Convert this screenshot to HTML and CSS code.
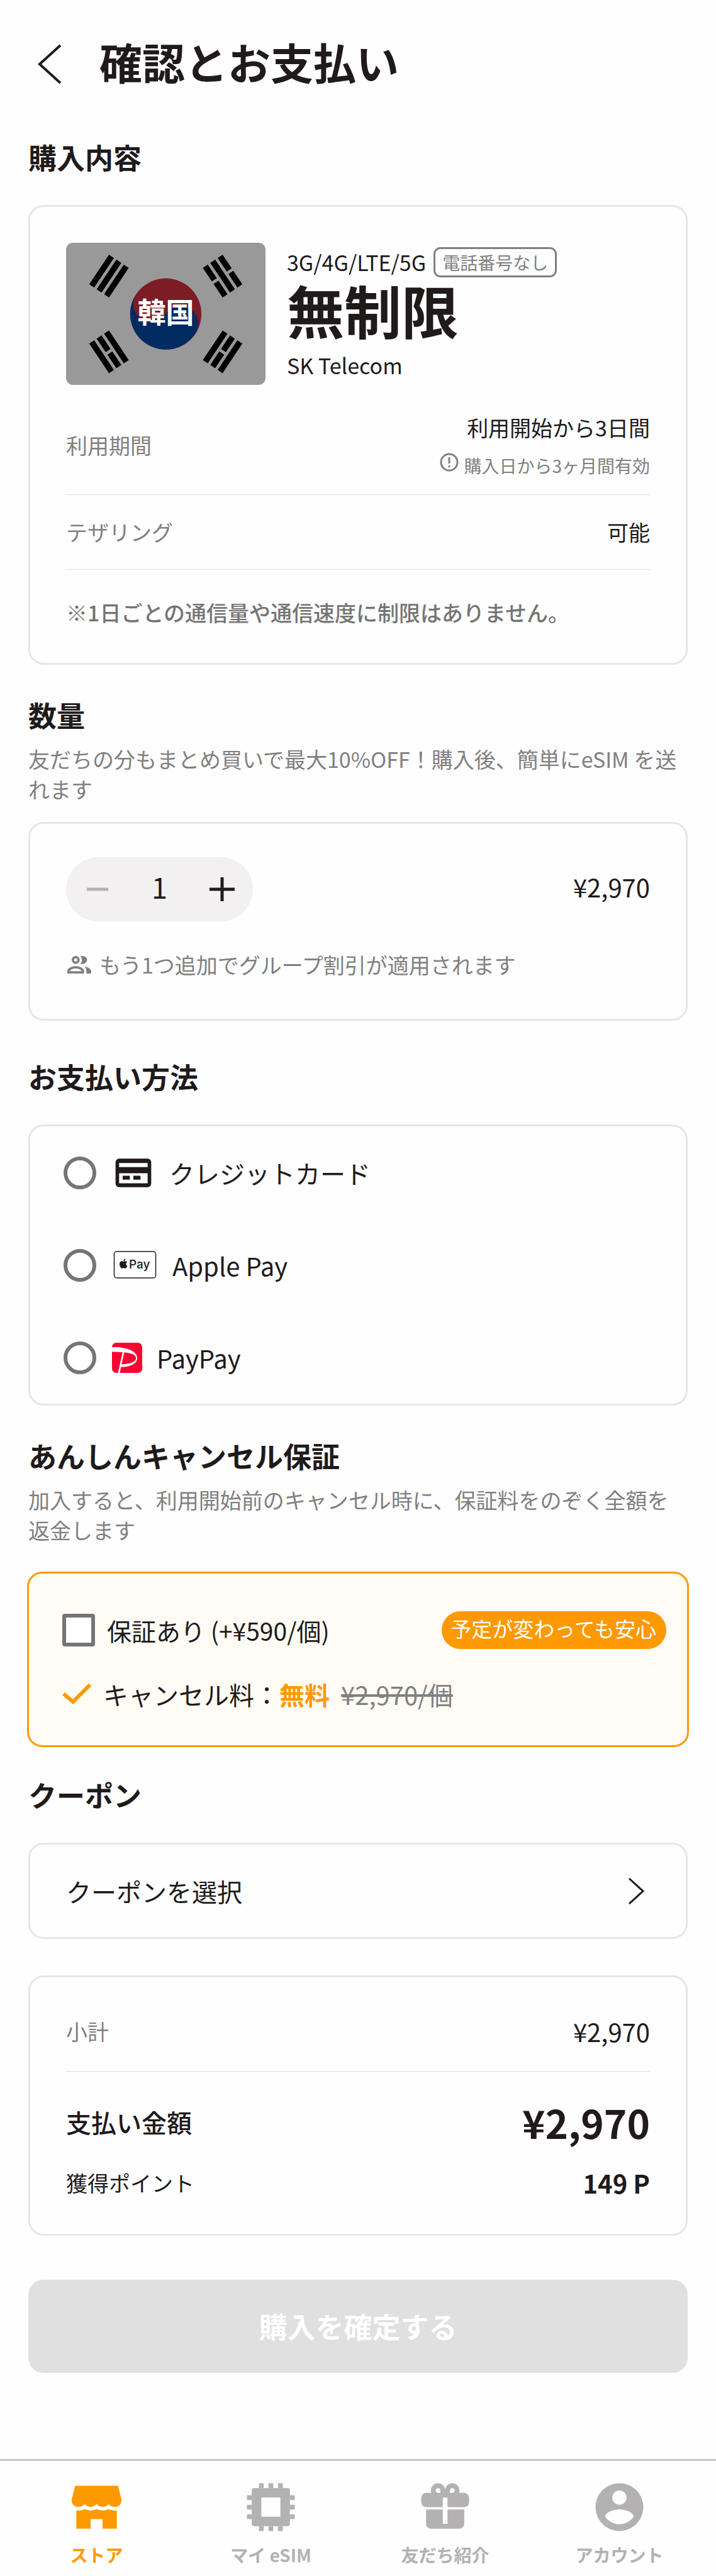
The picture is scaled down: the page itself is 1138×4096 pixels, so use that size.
FILE: index.html
```html
<!DOCTYPE html>
<html lang="ja">

<head>
    <meta charset="UTF-8">
    <meta name="viewport" content="width=device-width, initial-scale=1.0">
    <title>確認とお支払い</title>
    <link rel="stylesheet" href="styles.css">
</head>

<body>
    <header class="header">
        <button type="button" class="back-btn" aria-label="戻る">
            <svg width="38" height="64" viewBox="0 0 38 64" fill="none" stroke="currentColor" stroke-width="4">
                <path d="M36 2L3 32l33 30" />
            </svg>
        </button>
        <h1>確認とお支払い</h1>
    </header>

    <main class="container">
        <section class="section">
            <h2>購入内容</h2>
            <div class="card">
                <div class="plan">
                    <div class="plan-flag">
                        <svg class="flag" viewBox="-33.6 -24 67.2 48" aria-hidden="true">
                            <rect x="-34" y="-24" width="68" height="48" fill="#999" />
                            <g transform="rotate(-56.31)">
                                <g id="bars" stroke="#000" stroke-width="2">
                                    <path d="M-6-26H6M-6-23H6M-6-20H6" />
                                    <path d="M-6 20H6M-6 23H6M-6 26H6" />
                                </g>
                                <path stroke="#999" d="M0 21.5v3" />
                                <circle r="12" fill="#7c1c24" />
                                <path fill="#002b60" d="M0-12A6 6 0 0 0 0 0A6 6 0 0 1 0 12A12 12 0 0 1 0-12Z" />
                            </g>
                            <g transform="rotate(-123.69)">
                                <use href="#bars" />
                                <path stroke="#999" d="M0-24.5v3M0 18.5v3.5M0 24.5v3" />
                            </g>
                        </svg>
                        <span class="flag-name">韓国</span>
                    </div>
                    <div class="plan-info">
                        <div class="plan-network">3G/4G/LTE/5G <span class="tag">電話番号なし</span></div>
                        <p class="plan-data">無制限</p>
                        <p class="plan-carrier">SK Telecom</p>
                    </div>
                </div>

                <dl class="details">
                    <div class="detail-row period">
                        <dt>利用期間</dt>
                        <dd>
                            <p>利用開始から3日間</p>
                            <p class="validity">
                                <svg width="30" height="30" viewBox="0 0 30 30" fill="none" stroke="currentColor" stroke-width="3">
                                    <circle cx="15" cy="15" r="13" />
                                    <path d="M15 7v10M15 20v3" />
                                </svg>
                                購入日から3ヶ月間有効
                            </p>
                        </dd>
                    </div>
                    <div class="detail-row">
                        <dt>テザリング</dt>
                        <dd>可能</dd>
                    </div>
                </dl>
                <p class="note">※1日ごとの通信量や通信速度に制限はありません。</p>
            </div>
        </section>

        <section class="section">
            <h2>数量</h2>
            <p class="description">友だちの分もまとめ買いで最大10%OFF！購入後、簡単にeSIM を送れます</p>
            <div class="card quantity-card">
                <div class="quantity-row">
                    <div class="stepper">
                        <button type="button" aria-label="減らす" disabled>
                            <svg width="40" height="40" viewBox="0 0 40 40" stroke="currentColor" stroke-width="5">
                                <path d="M3 20h34" />
                            </svg>
                        </button>
                        <output>1</output>
                        <button type="button" aria-label="増やす">
                            <svg width="40" height="40" viewBox="0 0 40 40" stroke="currentColor" stroke-width="5">
                                <path d="M0 20h40M20 1v38" />
                            </svg>
                        </button>
                    </div>
                    <span class="price">¥2,970</span>
                </div>
                <p class="group-hint">
                    <svg width="38" height="28" viewBox="0 0 114 84" fill="currentColor">
                        <circle cx="40" cy="19" r="13.5" fill="none" stroke="currentColor" stroke-width="11" />
                        <path d="M62 1c16-4 32 4 32 18S78 42 62 38c10-10 10-27 0-37z" />
                        <path fill-rule="evenodd" d="M0 84V72c0-15 25-23 40-23s40 8 40 23v12zM12 73h56c0-7-16-13-28-13s-28 6-28 13z" />
                        <path d="M82 50c18 4 32 11 32 24v10H91V72c0-9-3-16-9-22z" />
                    </svg>
                    もう1つ追加でグループ割引が適用されます
                </p>
            </div>
        </section>

        <section class="section payment">
            <h2>お支払い方法</h2>
            <div class="card payment-card">
                <label class="payment-option">
                    <input type="radio" name="payment" value="card">
                    <svg width="68" height="68" viewBox="0 0 24 24" fill="currentColor">
                        <path fill-rule="evenodd" d="M4 4h16a2 2 0 0 1 2 2v12a2 2 0 0 1-2 2H4a2 2 0 0 1-2-2V6a2 2 0 0 1 2-2zm0 2.4v2.3h16V6.4zm0 5.8v5.6h16v-5.6z" />
                        <path d="M6 13.6h4v2.2H6zM12 13.6h4v2.2h-4z" />
                    </svg>
                    <span>クレジットカード</span>
                </label>
                <label class="payment-option">
                    <input type="radio" name="payment" value="apple">
                    <svg width="73" height="46" viewBox="0 0 73 46">
                        <rect x="3.5" y="1" width="66" height="42" rx="4" fill="#fff" stroke="#201a1b" stroke-width="1.5" />
                        <path fill="#201a1b" transform="translate(10.5 12.5) scale(.64)" d="M12.152 6.896c-.948 0-2.415-1.078-3.96-1.04-2.04.027-3.91 1.183-4.961 3.014-2.117 3.675-.546 9.103 1.519 12.09 1.013 1.454 2.208 3.09 3.792 3.039 1.52-.065 2.09-.987 3.935-.987 1.831 0 2.35.987 3.96.948 1.637-.026 2.676-1.48 3.676-2.948 1.156-1.688 1.636-3.325 1.662-3.415-.039-.013-3.182-1.221-3.22-4.857-.026-3.04 2.48-4.494 2.597-4.559-1.429-2.09-3.623-2.324-4.39-2.376-2-.156-3.675 1.09-4.61 1.09zM15.53 3.83c.843-1.012 1.4-2.427 1.245-3.83-1.207.052-2.662.805-3.532 1.818-.78.896-1.454 2.338-1.273 3.714 1.338.104 2.715-.688 3.559-1.701" />
                        <text class="apple-text" x="27" y="28">Pay</text>
                    </svg>
                    <span>Apple Pay</span>
                </label>
                <label class="payment-option">
                    <input type="radio" name="payment" value="paypay">
                    <svg width="48" height="48" viewBox="0 0 152 152">
                        <rect width="152" height="152" rx="22" fill="#ff0033" />
                        <path fill="#fff" d="M0 22C74 20 127 42 127 77C127 106 90 123 46 123L49 109C88 107 121 99 121 77C121 58 88 46 0 46ZM54 46h8L39 152h-9z" />
                    </svg>
                    <span>PayPay</span>
                </label>
            </div>
        </section>

        <section class="section">
            <h2>あんしんキャンセル保証</h2>
            <p class="description">加入すると、利用開始前のキャンセル時に、保証料をのぞく全額を返金します</p>
            <div class="card guarantee-card">
                <div class="guarantee-row">
                    <label class="guarantee-label">
                        <input type="checkbox" name="guarantee">
                        <span>保証あり (+¥590/個)</span>
                    </label>
                    <span class="badge">予定が変わっても安心</span>
                </div>
                <p class="cancel-fee">
                    <svg width="47" height="34" viewBox="0 0 47 34" fill="none" stroke="currentColor" stroke-width="6">
                        <path d="M2 16l15 13L44 2" />
                    </svg>
                    <span>キャンセル料：<strong>無料</strong></span>
                    <s>¥2,970/個</s>
                </p>
            </div>
        </section>

        <section class="section coupon">
            <h2>クーポン</h2>
            <button type="button" class="card coupon-btn">
                <span>クーポンを選択</span>
                <svg width="34" height="42" viewBox="0 0 34 42" fill="none" stroke="currentColor" stroke-width="3">
                    <path d="M1 1l22 20L1 41" />
                </svg>
            </button>
        </section>

        <dl class="card summary">
            <div class="summary-row subtotal">
                <dt>小計</dt>
                <dd>¥2,970</dd>
            </div>
            <div class="summary-row total">
                <dt>支払い金額</dt>
                <dd>¥2,970</dd>
            </div>
            <div class="summary-row points">
                <dt>獲得ポイント</dt>
                <dd>149 P</dd>
            </div>
        </dl>

        <button type="submit" class="submit-btn" disabled>購入を確定する</button>
    </main>

    <nav class="tab-bar">
        <a href="#" class="tab active">
            <svg viewBox="0 0 24 24" fill="currentColor">
                <path d="M3 3h18l1.5 6c0 1.7-1.3 2.9-2.8 2.9-1.2 0-2.2-.5-2.7-1.2-.5.7-1.5 1.2-2.5 1.2s-2-.5-2.5-1.2c-.5.7-1.5 1.2-2.5 1.2s-2-.5-2.5-1.2c-.5.7-1.5 1.2-2.7 1.2-1.5 0-2.8-1.2-2.8-2.9z" />
                <path d="M3.5 13.4c1.2.1 2.5 0 3.5-.6 1.5.8 3.5.8 5 0 1.5.8 3.5.8 5 0 1 .6 2.3.7 3.5.6V21h-6v-4h-5v4h-6z" />
            </svg>
            ストア
        </a>
        <a href="#" class="tab">
            <svg viewBox="0 0 24 24" fill="currentColor">
                <path fill-rule="evenodd" d="M5 4h14a1 1 0 0 1 1 1v14a1 1 0 0 1-1 1H5a1 1 0 0 1-1-1V5a1 1 0 0 1 1-1zm3 4v8h8V8z" />
                <path d="M7 2h2v2H7zM11 2h2v2h-2zM15 2h2v2h-2zM7 20h2v2H7zM11 20h2v2h-2zM15 20h2v2h-2zM2 7h2v2H2zM2 11h2v2H2zM2 15h2v2H2zM20 7h2v2h-2zM20 11h2v2h-2zM20 15h2v2h-2z" />
            </svg>
            マイ eSIM
        </a>
        <a href="#" class="tab">
            <svg viewBox="0 0 24 24" fill="currentColor">
                <path fill-rule="evenodd" d="M4 6h2.2A3 3 0 1 1 12 4.7 3 3 0 1 1 17.8 6H20a2 2 0 0 1 2 2v2a2 2 0 0 1-2 2h-7V8h-2v4H4a2 2 0 0 1-2-2V8a2 2 0 0 1 2-2zm5-2a1 1 0 0 0-.4 1.9q.4.2 1.4.1V5a1 1 0 0 0-1-1zm6 0a1 1 0 0 0-1 1v1q1 .1 1.4-.1A1 1 0 0 0 15 4z" />
                <path d="M4 13h7v6h2v-6h7v6a2 2 0 0 1-2 2H6a2 2 0 0 1-2-2z" />
            </svg>
            友だち紹介
        </a>
        <a href="#" class="tab">
            <svg viewBox="0 0 24 24" fill="currentColor">
                <path d="M12 2C6.48 2 2 6.48 2 12s4.48 10 10 10 10-4.48 10-10S17.52 2 12 2zm0 3c1.66 0 3 1.34 3 3s-1.34 3-3 3-3-1.34-3-3 1.34-3 3-3zm0 14.2c-2.5 0-4.71-1.28-6-3.22.03-1.99 4-3.08 6-3.08 1.99 0 5.97 1.09 6 3.08-1.29 1.94-3.5 3.22-6 3.22z" />
            </svg>
            アカウント
        </a>
    </nav>
</body>

</html>
```
FILE: styles.css
```css
* {
    box-sizing: border-box;
}

body {
    margin: 0;
    min-height: 100vh;
    display: flex;
    flex-direction: column;
    font-family: "Noto Sans CJK JP", sans-serif;
    font-size: 34px;
    line-height: 48px;
    color: #201a1b;
    background-color: #fefefe;
}

h1,
h2,
p,
dl,
dd {
    margin: 0;
}

button,
input {
    font: inherit;
    color: inherit;
    margin: 0;
}

button {
    padding: 0;
    border: none;
    background: none;
    cursor: pointer;
}

svg {
    display: block;
    flex-shrink: 0;
}

.header {
    display: flex;
    align-items: center;
    gap: 60px;
    padding: 48px 60px 22px;
}

.back-btn {
    padding-top: 8px;
}

h1 {
    font-size: 68px;
    line-height: 100px;
    font-weight: bold;
}

.container {
    padding: 0 45px;
}

.section {
    padding-top: 48px;
}

.section.payment {
    padding-top: 57px;
}

.section.coupon {
    padding-top: 44px;
}

h2 {
    font-size: 45px;
    line-height: 64px;
    font-weight: bold;
    margin-bottom: 44px;
}

h2:has(+ .description) {
    margin-bottom: 14px;
}

.description {
    color: #808080;
    margin-bottom: 28px;
}

.card {
    border: 3px solid #e6e6e6;
    border-radius: 24px;
    padding: 57px;
}

/* Plan */
.plan {
    display: flex;
    align-items: center;
    gap: 34px;
}

.plan-flag {
    display: grid;
    place-items: center;
    width: 317px;
    border-radius: 11px;
    overflow: hidden;
}

.flag,
.flag-name {
    grid-area: 1 / 1;
}

.flag {
    width: 100%;
}

.flag-name {
    z-index: 1;
    padding-bottom: 8px;
    color: #fff;
    font-size: 45px;
    font-weight: bold;
}

.plan-network {
    display: flex;
    align-items: center;
    gap: 12px;
}

.tag {
    padding: 0 11px;
    border: 3px solid #808080;
    border-radius: 11px;
    color: #808080;
    font-size: 28px;
    line-height: 42px;
}

.plan-data {
    font-size: 91px;
    line-height: 100px;
    font-weight: bold;
    margin-bottom: 16px;
}

.detail-row {
    display: flex;
    justify-content: space-between;
    align-items: center;
    padding: 35px 0;
    border-bottom: 1px solid #e0e0e0;
}

.detail-row.period {
    padding: 44px 0 26px;
}

.detail-row dt {
    color: #808080;
}

.detail-row dd {
    text-align: right;
}

.validity {
    display: flex;
    gap: 8px;
    margin-top: 16px;
    color: #808080;
    font-size: 28px;
    line-height: 40px;
}

.note {
    margin-top: 45px;
    line-height: 46px;
    color: #757575;
    font-weight: 500;
}

/* Quantity */
.quantity-card {
    padding: 53px 57px 62px;
}

.quantity-row {
    display: flex;
    justify-content: space-between;
    align-items: center;
    margin-bottom: 45px;
}

.stepper {
    display: grid;
    grid-template-columns: repeat(3, 1fr);
    width: 297px;
    height: 102px;
    border-radius: 51px;
    background-color: #f2f0f1;
}

.stepper > * {
    display: flex;
    align-items: center;
    justify-content: center;
}

.stepper output {
    font-size: 45px;
    padding-bottom: 8px;
}

.stepper button:disabled {
    color: #b3b1b2;
    cursor: default;
}

.price {
    font-size: 40px;
    padding-bottom: 8px;
}

.group-hint {
    display: flex;
    align-items: center;
    gap: 13px;
    padding-left: 2px;
    color: #808080;
}

/* Payment method */
.payment-card {
    padding: 0 53px;
}

.payment-option {
    display: flex;
    align-items: center;
    height: 147px;
    gap: 23px;
    font-size: 40px;
    cursor: pointer;
}

input[type="radio"],
input[type="checkbox"] {
    appearance: none;
    flex-shrink: 0;
    width: 52px;
    height: 52px;
    border: 6px solid #757575;
    background-color: #fff;
}

input[type="radio"] {
    margin-right: 2px;
    border-radius: 50%;
}

input[type="radio"]:checked {
    border-color: #ff9900;
    box-shadow: inset 0 0 0 8px #fff, inset 0 0 0 26px #ff9900;
}

.apple-text {
    font-family: Inter, sans-serif;
    font-size: 19px;
    font-weight: 500;
    fill: #201a1b;
}

/* Cancel guarantee */
.guarantee-card {
    margin: 42px -2px 0;
    padding: 60px 33px 52px 53px;
    border-color: #ff9900;
    background-color: #fffcf5;
    line-height: 58px;
}

.guarantee-row {
    display: flex;
    justify-content: space-between;
    align-items: center;
    margin-bottom: 43px;
}

.guarantee-label {
    display: flex;
    align-items: center;
    gap: 19px;
    font-size: 39px;
}

input[type="checkbox"] {
    border-radius: 4px;
}

input[type="checkbox"]:checked {
    background-color: #ff9900;
    border-color: #ff9900;
}

.badge {
    padding: 0 16px 6px 14px;
    border-radius: 30px;
    background-color: #ff9900;
    color: #fff;
    font-size: 33px;
    line-height: 54px;
}

.cancel-fee {
    display: flex;
    align-items: center;
    gap: 18px;
    font-size: 40px;
}

.cancel-fee svg,
.cancel-fee strong {
    color: #ff9900;
}

.cancel-fee s {
    color: #808080;
}

/* Coupon */
.coupon-btn {
    display: flex;
    justify-content: space-between;
    align-items: center;
    width: 100%;
    height: 153px;
    padding: 0 57px;
    font-size: 40px;
}

/* Summary */
.summary {
    margin-top: 58px;
}

.summary-row {
    display: flex;
    justify-content: space-between;
    align-items: center;
}

.subtotal {
    padding-bottom: 34px;
    border-bottom: 1px solid #e0e0e0;
    line-height: 58px;
}

.subtotal dt {
    color: #808080;
}

.subtotal dd {
    font-size: 40px;
}

.total {
    margin: 35px 0 28px;
    font-size: 40px;
    font-weight: 500;
    line-height: 90px;
}

.total dd {
    font-size: 62px;
    font-weight: bold;
}

.points dd {
    font-size: 40px;
    font-weight: bold;
}

.submit-btn {
    width: 100%;
    height: 148px;
    margin: 70px 0 48px;
    border-radius: 24px;
    background-color: #ff9900;
    color: #fff;
    font-size: 45px;
    font-weight: bold;
}

.submit-btn:disabled {
    background-color: #e0e0e0;
    cursor: not-allowed;
}

/* Bottom tabs */
.tab-bar {
    display: grid;
    grid-template-columns: repeat(4, 1fr);
    margin-top: auto;
    padding: 28px 15px 14px;
    border-top: 3px solid #c8c8c8;
}

.tab {
    display: flex;
    flex-direction: column;
    align-items: center;
    gap: 10px;
    color: #b3b1b2;
    font-size: 28px;
    line-height: 40px;
    font-weight: bold;
    text-decoration: none;
}

.tab svg {
    width: 91px;
    height: 91px;
}

.tab.active {
    color: #ff9900;
}
```
